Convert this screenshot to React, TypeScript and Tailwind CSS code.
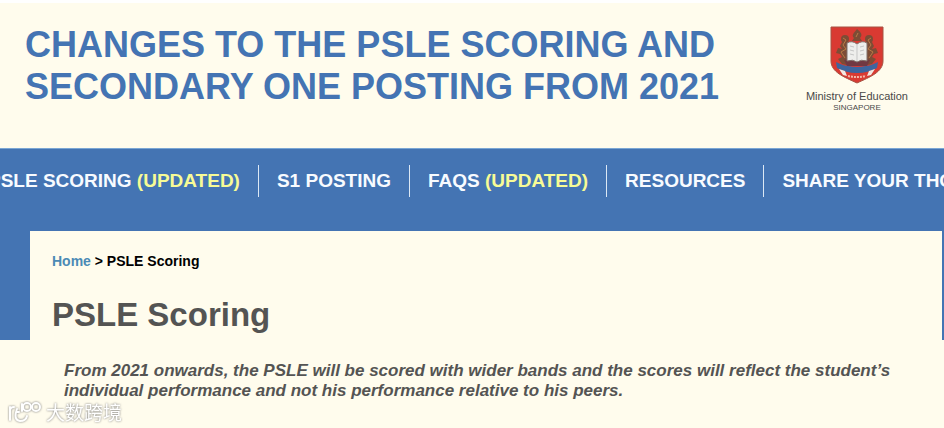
const navItems = [
  { label: 'PSLE SCORING', updated: true },
  { label: 'S1 POSTING', updated: false },
  { label: 'FAQS', updated: true },
  { label: 'RESOURCES', updated: false },
  { label: 'SHARE YOUR THOUGHTS', updated: false },
]

function Crest() {
  return (
    <svg viewBox="0 0 54 58" className="h-[58px] w-[54px]" aria-hidden="true">
      <path d="M1 1h52v34c0 11-13 16-26 22C14 51 1 46 1 35z" fill="#d93a32" stroke="#a65343" />
      {/* lions and torch */}
      <g fill="#7d4c35">
        <path d="M27 3c4 3 6 6 3 9l2 3H22l2-3c-3-3 0-5 3-9z" />
        <circle cx="15" cy="13" r="4" />
        <path d="M12 16q5-2 7 2v15l5 4-3 3-9-2-4-5 4-2-2-3-4-1 2-5 4 1-2-3z" />
        <circle cx="39" cy="13" r="4" />
        <path d="M42 16q-5-2-7 2v15l-5 4 3 3 9-2 4-5-4-2 2-3 4-1-2-5-4 1 2-3z" />
      </g>
      <path d="M13 12l3 2-3 5 3 4-5 3 4 6M41 12l-3 2 3 5-3 4 5 3-4 6M26 11l2-4" fill="none" stroke="#b97a45" />
      <path d="M14 34q13-4 26 0l-3 6H17z" fill="#713842" />
      <path d="M27 18q-5-4-10-1v18q6-2 10 1 4-3 10-1V17q-5-3-10 1z" fill="#eeeeec" stroke="#81716a" />
      <path d="M27 18v17M20 20l4 1M20 24l4 1M20 28l4 1M34 20l-4 1M34 24l-4 1M34 28l-4 1" fill="none" stroke="#c5c5c5" />
      {/* ribbon */}
      <path d="M6 36q8 4 12 4 9 2 18 0 4 0 12-4l-1 6q-9 5-20 5T7 42z" fill="#3d659e" />
      <path d="M9 43l6 2 2 5-4-1zM45 43l-6 2-2 5 4-1z" fill="#f2e9e2" />
      <path d="M18 50q9 2 18 0" fill="none" stroke="#f2b8aa" strokeWidth="2" strokeDasharray="2 1" />
    </svg>
  )
}

function Watermark() {
  return (
    <div className="absolute bottom-1 left-2 flex items-center gap-1 text-white drop-shadow-[0_0_1px_#777]">
      <svg viewBox="0 0 34 24" className="h-6 w-[34px]" fill="none" stroke="currentColor" strokeWidth="2" strokeLinecap="round" aria-hidden="true">
        <path d="M2 7v13M2 11q0-4 4-4M9 9q-4 11 3 12 6 0 7-5M9 12h2M14 11V4" />
        <circle cx="19" cy="7" r="4" />
        <circle cx="28" cy="7" r="4" />
      </svg>
      <span className="font-['Noto_Sans_CJK_SC',sans-serif] text-[19px] leading-6">大数跨境</span>
    </div>
  )
}

export default function App() {
  return (
    <div className="relative overflow-hidden border-t-[3px] border-white bg-[#fffced] font-['Liberation_Sans',Arial,sans-serif]">
      <header className="flex items-start justify-between pt-[21px] pr-9 pb-9 pl-[25px]">
        <h1 className="text-[36px] leading-[42px] font-bold text-[#4474b3]">
          CHANGES TO THE PSLE SCORING AND
          <br />
          SECONDARY ONE POSTING FROM 2021
        </h1>
        <div className="flex shrink-0 flex-col items-center pt-0.5 text-[#484848]">
          <Crest />
          <span className="mt-1 text-[11px] leading-4">Ministry of Education</span>
          <span className="text-[8px] leading-2">SINGAPORE</span>
        </div>
      </header>

      <nav className="overflow-hidden border-t border-[#7aa6d4] bg-[#4474b3] pt-4 pb-[34px]">
        <ul className="-ml-[30px] flex divide-x divide-[#dce8f5]">
          {navItems.map((item) => (
            <li key={item.label} className="shrink-0 px-[18px]">
              <a href="#" className="block text-[19px] leading-8 font-bold whitespace-nowrap text-[#f8fbff]">
                {item.label}
                {item.updated && <span className="text-[#f7fb96]"> (UPDATED)</span>}
              </a>
            </li>
          ))}
        </ul>
      </nav>

      <div className="flex items-start">
        <div className="h-[109px] w-[30px] shrink-0 bg-[#4474b3]" />
        <main className="min-w-0 flex-1 pt-5 pb-[27px] pl-[22px]">
          <p className="text-[14px] leading-5 font-bold text-black">
            <a href="#" className="text-[#4b8ab5]">Home</a> &gt; PSLE Scoring
          </p>
          <h2 className="mt-6 text-[33px] leading-10 font-bold text-[#545453]">PSLE Scoring</h2>
          <p className="mt-[26px] pr-6 pl-3 text-[17px] leading-5 font-bold text-[#545453] italic">
            From 2021 onwards, the PSLE will be scored with wider bands and the scores will reflect the student’s individual performance and not his performance relative to his peers.
          </p>
        </main>
        <div className="h-[109px] w-0.5 shrink-0 bg-[#4474b3]" />
      </div>
      <Watermark />
    </div>
  )
}
